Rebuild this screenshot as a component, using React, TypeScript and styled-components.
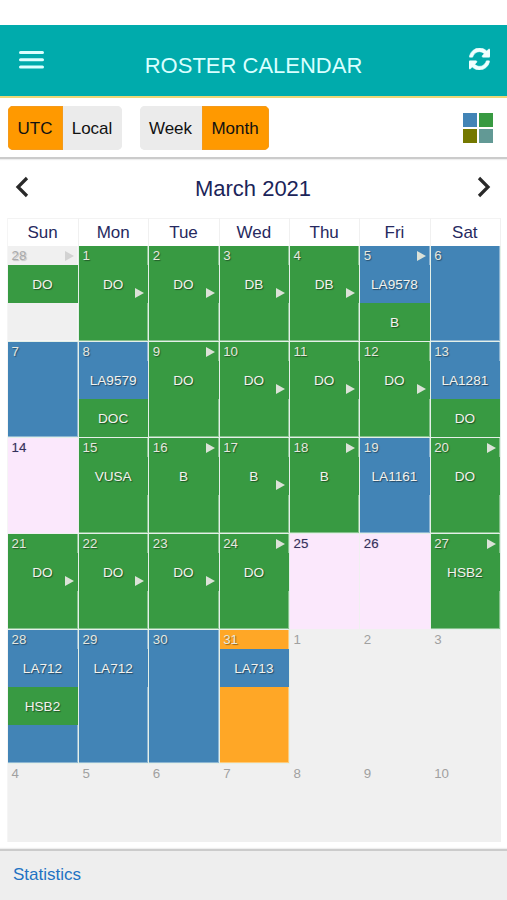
import React from 'react';
import styled, { createGlobalStyle, css } from 'styled-components';

const GREEN = '#389a42';
const BLUE = '#4284b6';
const PINK = '#fbe8fc';
const GREY = '#f0f0f0';
const ORANGE = '#ffa726';

const GlobalStyle = createGlobalStyle`
  * { box-sizing: border-box; }
  body { margin: 0; background: #fff; font-family: "Liberation Sans", Arial, sans-serif; overflow: hidden; }
  button { font: inherit; border: 0; padding: 0; background: none; }
`;

const Screen = styled.div`
  width: 507px;
  height: 900px;
  padding-top: 25px;
  display: flex;
  flex-direction: column;
  background: #fff;
`;

const Header = styled.header`
  height: 73px;
  flex: none;
  display: grid;
  grid-template-columns: 60px 1fr 60px;
  background: #00abac;
  border-bottom: 2px solid #edd877;
`;

const MenuButton = styled.button`
  display: flex;
  align-items: flex-start;
  padding: 25px 0 0 19px;
`;

const Title = styled.h1`
  margin: 0;
  padding-top: 27px;
  text-align: center;
  font-size: 22px;
  line-height: 28px;
  font-weight: 400;
  color: #d9ffff;
  white-space: nowrap;
`;

const RefreshButton = styled.button`
  display: flex;
  align-items: flex-start;
  padding: 23px 0 0 22px;
`;

const Toolbar = styled.div`
  height: 61px;
  flex: none;
  display: flex;
  align-items: flex-start;
  gap: 18px;
  padding: 8px 14px 0 8px;
  border-bottom: 2px solid #cbcbcb;
  box-shadow: 0 1px 1px #eee;
`;

const Segmented = styled.div`
  display: flex;
  height: 44px;
  border-radius: 5px;
  overflow: hidden;
  background: #ebebeb;
`;

const Segment = styled.button<{ $active?: boolean; $width: number }>`
  width: ${(p) => p.$width}px;
  padding: 1px 1px 0 0;
  font-size: 17px;
  color: #111;
  background: ${(p) => (p.$active ? '#ff9900' : '#ebebeb')};
  box-shadow: ${(p) => (p.$active ? 'inset 0 0 0 1px #f39a1c' : 'none')};
`;

const Legend = styled.div`
  margin: 7px 0 0 auto;
  display: grid;
  grid-template-columns: 14px 14px;
  grid-auto-rows: 14px;
  gap: 2px;
`;

const Swatch = styled.span<{ $color: string }>`
  background: ${(p) => p.$color};
`;

const MonthNav = styled.div`
  height: 59px;
  flex: none;
  display: flex;
  justify-content: space-between;
  padding: 17px 16px 0 15px;
`;

const MonthTitle = styled.h2`
  margin: 0;
  font-size: 22px;
  line-height: 26px;
  font-weight: 400;
  color: #1b2459;
`;

const Calendar = styled.div`
  width: 493px;
  margin-left: 8px;
  flex: none;
  display: grid;
  grid-template-columns: 71px repeat(6, 1fr);
  grid-template-rows: 28px 96px 96px 96px 96px 134px 78px;
  box-shadow: -1px 0 0 #f5f5f5;
`;

const Weekday = styled.div`
  display: flex;
  align-items: center;
  justify-content: center;
  padding-right: 1px;
  font-size: 17px;
  color: #262960;
  border-top: 1px solid #f3f3f3;
  border-right: 1px solid #f0f0f0;
`;

const Day = styled.div<{ $fill: string; $line: string }>`
  display: flex;
  flex-direction: column;
  min-width: 0;
  background: ${(p) => p.$fill};
  border-right: 1px solid ${(p) => p.$line};
  border-bottom: 1px solid ${(p) => p.$line};
  box-shadow: inset -1px -1px 0 ${(p) => (p.$line === GREY ? 'transparent' : 'rgba(255, 255, 255, .4)')};
`;

const DateLine = styled.div<{ $color: string; $shadow: string }>`
  height: 19px;
  flex: none;
  display: flex;
  align-items: center;
  justify-content: space-between;
  padding: 0 4px 0 3.5px;
  font-size: 13.3px;
  color: ${(p) => p.$color};
  text-shadow: ${(p) => p.$shadow};
`;

const Duty = styled.div<{ $fill: string }>`
  position: relative;
  height: 38px;
  flex: none;
  padding-right: 1px;
  display: flex;
  align-items: center;
  justify-content: center;
  font-size: 13.6px;
  color: #f3f3ee;
  background: ${(p) => p.$fill};
  text-shadow: 1px 1px 1px rgba(0, 0, 0, 0.45);
`;

const Arrow = styled.span<{ $corner?: boolean; $faint?: boolean }>`
  width: 0;
  height: 0;
  border: solid transparent;
  border-width: 5px 0 5px 9px;
  border-left-color: ${(p) => (p.$faint ? '#d2d2d2' : '#dce2d8')};
  ${(p) => p.$corner && css`
    position: absolute;
    right: 4px;
    bottom: 5px;
  `}
`;

const Footer = styled.footer`
  margin-top: auto;
  height: 51px;
  flex: none;
  padding: 14px 13px;
  border-top: 2px solid #cbcbcb;
  box-shadow: 0 -1px 1px #eee;
  background: #eee;
`;

const StatsLink = styled.a`
  font-size: 17px;
  line-height: 20px;
  color: #2272c3;
`;

type DutyItem = { code: string; fill: string; arrow?: boolean };
type DayKind = 'out' | 'free' | 'ghost' | 'work';
type DayItem = { date: number; fill: string; kind?: DayKind; arrow?: boolean; duties?: DutyItem[] };

const g = (code: string, arrow = false): DutyItem => ({ code, fill: GREEN, arrow });
const b = (code: string): DutyItem => ({ code, fill: BLUE });
const green = (date: number, code: string, at: 'top' | 'duty' | 'none' = 'none'): DayItem => ({
  date, fill: GREEN, arrow: at === 'top', duties: [g(code, at === 'duty')],
});
const blue = (date: number, duties: DutyItem[] = [], arrow = false): DayItem => ({ date, fill: BLUE, duties, arrow });
const free = (date: number): DayItem => ({ date, fill: PINK, kind: 'free' });
const out = (date: number): DayItem => ({ date, fill: GREY, kind: 'out' });

const days: DayItem[] = [
  { date: 28, fill: GREY, kind: 'ghost', arrow: true, duties: [g('DO')] },
  green(1, 'DO', 'duty'), green(2, 'DO', 'duty'), green(3, 'DB', 'duty'), green(4, 'DB', 'duty'),
  blue(5, [b('LA9578'), g('B')], true), blue(6),
  blue(7), blue(8, [b('LA9579'), g('DOC')]), green(9, 'DO', 'top'), green(10, 'DO', 'duty'),
  green(11, 'DO', 'duty'), green(12, 'DO', 'duty'), blue(13, [b('LA1281'), g('DO')]),
  free(14), green(15, 'VUSA'), green(16, 'B', 'top'), green(17, 'B', 'duty'), green(18, 'B', 'top'),
  blue(19, [b('LA1161')]), green(20, 'DO', 'top'),
  green(21, 'DO', 'duty'), green(22, 'DO', 'duty'), green(23, 'DO', 'duty'), green(24, 'DO', 'top'),
  free(25), free(26), green(27, 'HSB2', 'top'),
  blue(28, [b('LA712'), g('HSB2')]), blue(29, [b('LA712')]), blue(30),
  { date: 31, fill: ORANGE, duties: [b('LA713')] },
  out(1), out(2), out(3), out(4), out(5), out(6), out(7), out(8), out(9), out(10),
];

const dateStyle: Record<DayKind, { color: string; shadow: string }> = {
  work: { color: '#e6e8df', shadow: '1px 1px 1px rgba(0, 0, 0, .4)' },
  free: { color: '#34305c', shadow: '0 0 1px rgba(80, 80, 100, .35)' },
  ghost: { color: '#aaa', shadow: '1px 1px 1px rgba(0, 0, 0, .2)' },
  out: { color: '#a0a0a0', shadow: 'none' },
};

const Chevron = ({ right }: { right?: boolean }) => (
  <svg width="14" height="22" viewBox="0 0 14 22" fill="none" stroke="#292929" strokeWidth="3.2">
    <path d={right ? 'M2 2L11 11L2 20' : 'M12 2L3 11L12 20'} />
  </svg>
);

export default function App() {
  return (
    <Screen>
      <GlobalStyle />
      <Header>
        <MenuButton aria-label="Menu">
          <svg width="25" height="20" viewBox="0 0 25 20" stroke="#dcffff" strokeWidth="3" strokeLinecap="round">
            <path d="M1.5 2.5H23.5M1.5 9.8H23.5M1.5 17H23.5" />
          </svg>
        </MenuButton>
        <Title>ROSTER CALENDAR</Title>
        <RefreshButton aria-label="Refresh">
          <svg width="21" height="22" viewBox="0 0 1536 1536" preserveAspectRatio="none" fill="#f0ffff" stroke="#f0ffff" strokeWidth="40">
            <path d="M1511 928q0 5-1 7-64 268-268 434.500T764 1536q-146 0-282.500-55T238 1324l-129 129q-19 19-45 19t-45-19-19-45V960q0-26 19-45t45-19h448q26 0 45 19t19 45-19 45l-137 137q71 66 161 102t187 36q134 0 250-65t186-179q11-17 53-117 8-23 30-23h192q13 0 22.500 9.500t9.500 22.500zm25-800v448q0 26-19 45t-45 19h-448q-26 0-45-19t-19-45 19-45l138-138Q969 256 768 256q-134 0-250 65T332 500q-11 17-53 117-8 23-30 23H50q-13 0-22.500-9.500T18 608v-7q65-268 270-434.500T768 0q146 0 284 55.500T1297 212l130-129q19-19 45-19t45 19 19 45z" />
          </svg>
        </RefreshButton>
      </Header>
      <Toolbar>
        <Segmented>
          <Segment $active $width={55}>UTC</Segment>
          <Segment $width={59}>Local</Segment>
        </Segmented>
        <Segmented>
          <Segment $width={62}>Week</Segment>
          <Segment $active $width={67}>Month</Segment>
        </Segmented>
        <Legend>
          <Swatch $color={BLUE} />
          <Swatch $color={GREEN} />
          <Swatch $color="#747800" />
          <Swatch $color="#629995" />
        </Legend>
      </Toolbar>
      <MonthNav>
        <Chevron />
        <MonthTitle>March 2021</MonthTitle>
        <Chevron right />
      </MonthNav>
      <Calendar>
        {['Sun', 'Mon', 'Tue', 'Wed', 'Thu', 'Fri', 'Sat'].map((name) => (
          <Weekday key={name}>{name}</Weekday>
        ))}
        {days.map((day, i) => {
          const { color, shadow } = dateStyle[day.kind ?? 'work'];
          return (
            <Day key={i} $fill={day.fill} $line={day.kind === 'out' || day.kind === 'free' ? GREY : '#e4f0e8'}>
              <DateLine $color={color} $shadow={shadow}>
                {day.date}
                {day.arrow && <Arrow $faint={day.kind === 'ghost'} />}
              </DateLine>
              {day.duties?.map((duty) => (
                <Duty key={duty.code} $fill={duty.fill}>
                  {duty.code}
                  {duty.arrow && <Arrow $corner />}
                </Duty>
              ))}
            </Day>
          );
        })}
      </Calendar>
      <Footer>
        <StatsLink>Statistics</StatsLink>
      </Footer>
    </Screen>
  );
}
